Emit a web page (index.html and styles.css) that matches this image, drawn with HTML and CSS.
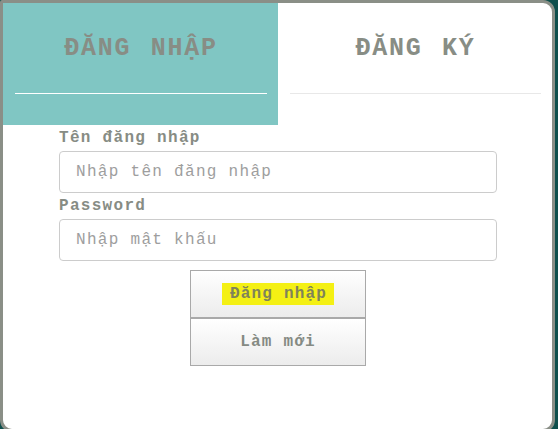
FILE: index.html
```html
<!DOCTYPE html>
<html lang="vi">
<head>
<meta charset="utf-8">
<title>Đăng nhập</title>
<link rel="stylesheet" href="styles.css">
</head>
<body>
<div class="modal">
  <div class="tabs">
    <div class="tab tab-active">
      <div class="tab-title">ĐĂNG NHẬP</div>
      <div class="tab-line"></div>
    </div>
    <div class="tab">
      <div class="tab-title">ĐĂNG KÝ</div>
      <div class="tab-line"></div>
    </div>
  </div>
  <form class="form">
    <label class="label">Tên đăng nhập</label>
    <input class="input" type="text" placeholder="Nhập tên đăng nhập">
    <label class="label">Password</label>
    <input class="input" type="password" placeholder="Nhập mật khẩu">
    <div class="buttons">
      <button type="button" class="btn"><span class="mark">Đăng nhập</span></button>
      <button type="button" class="btn">Làm mới</button>
    </div>
  </form>
</div>
</body>
</html>
```

FILE: styles.css
```css
html, body {
  margin: 0;
  padding: 0;
}
body {
  width: 558px;
  height: 429px;
  background: #0e4f4c;
  overflow: hidden;
  font-family: "Courier New", "Liberation Mono", monospace;
}
.modal {
  width: 549px;
  height: 426px;
  border: 3px solid #8a8f87;
  border-radius: 2px 12px 12px 12px;
  background: #fff;
  overflow: hidden;
}
.tabs {
  display: flex;
  height: 122px;
}
.tab {
  display: flex;
  flex-direction: column;
  padding: 0 11px 0 12px;
  width: 274px;
  box-sizing: border-box;
}
.tab-active {
  width: 275px;
  background: #80c6c3;
}
.tab-title {
  height: 90px;
  display: flex;
  align-items: center;
  justify-content: center;
  font-size: 25px;
  font-weight: bold;
  letter-spacing: 1.7px;
  word-spacing: 3px;
  color: #888d85;
}
.tab-line {
  height: 1px;
  background: #e8e8e8;
}
.tab-active .tab-line {
  background: #ffffff;
}
.form {
  display: flex;
  flex-direction: column;
  padding: 0 55px 0 56px;
  margin: 0;
}
.label {
  font-size: 16px;
  font-weight: bold;
  letter-spacing: 1.3px;
  line-height: 26px;
  color: #878c84;
}
.input {
  box-sizing: border-box;
  height: 42px;
  margin: 0;
  padding: 0 16px;
  border: 1px solid #cccccc;
  border-radius: 4px;
  font-family: "Courier New", "Liberation Mono", monospace;
  font-size: 16px;
  letter-spacing: 1.3px;
  color: #555;
  outline: none;
}
.input::placeholder {
  color: #9e9e9e;
}
.buttons {
  display: flex;
  flex-direction: column;
  align-items: center;
  margin-top: 9px;
}
.btn {
  box-sizing: border-box;
  width: 176px;
  height: 48px;
  margin: 0;
  padding: 0;
  border: 1px solid #a9a9a9;
  border-radius: 0;
  background: linear-gradient(#ffffff, #ececec);
  font-family: "Courier New", "Liberation Mono", monospace;
  font-size: 16px;
  font-weight: bold;
  letter-spacing: 1.2px;
  color: #858a83;
}
.mark {
  display: inline-block;
  background: #f4f014;
  padding: 0 7px 0 8px;
  line-height: 22px;
  color: #80835a;
}
```
